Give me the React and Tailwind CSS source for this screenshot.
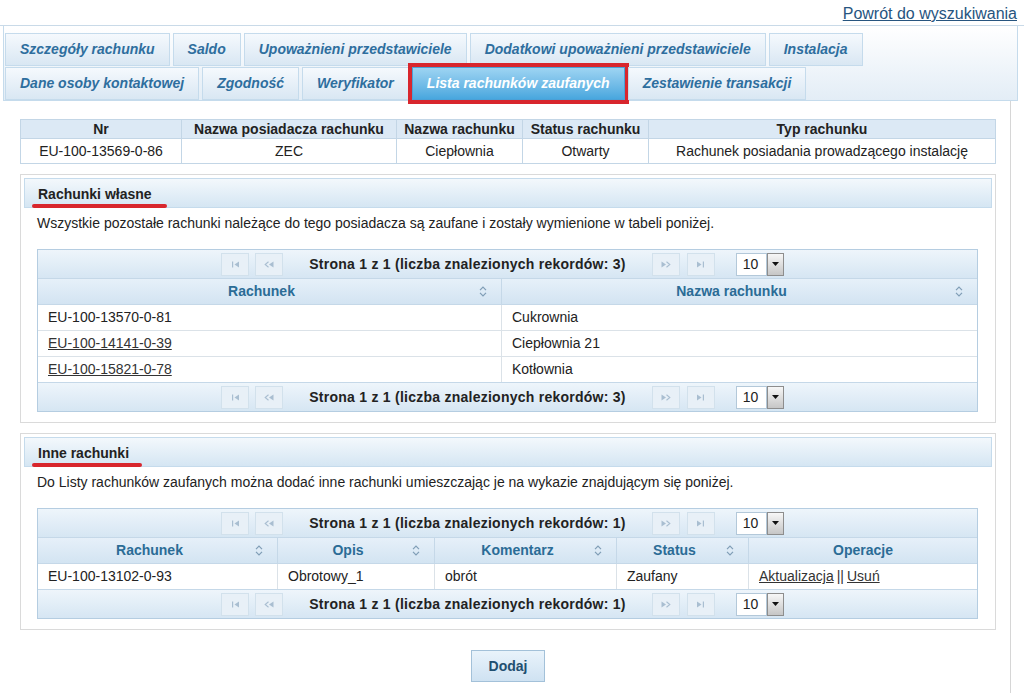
import React from "react";

const row1 = [
  "Szczegóły rachunku",
  "Saldo",
  "Upoważnieni przedstawiciele",
  "Dodatkowi upoważnieni przedstawiciele",
  "Instalacja",
];
const row2 = [
  "Dane osoby kontaktowej",
  "Zgodność",
  "Weryfikator",
  "Lista rachunków zaufanych",
  "Zestawienie transakcji",
];

function Tab({ label, active }) {
  if (active) {
    return (
      <div className="flex items-center px-[14px] border border-[#4ba0d6] bg-linear-to-b from-[#9dd4f2] to-[#48a7de] text-white font-bold italic outline-4 outline-[#d8262d]">
        {label}
      </div>
    );
  }
  return (
    <div className="flex items-center px-[14px] border border-[#c5dbec] bg-linear-to-b from-[#f5f9fd] to-[#d9e7f3] text-[#2e6e9e] font-bold italic">
      {label}
    </div>
  );
}

function SortIcon() {
  return (
    <svg
      width="8"
      height="11"
      viewBox="0 0 8 11"
      className="absolute right-[14px] top-[7px]"
    >
      <path d="M1 4.2 L4 1.2 L7 4.2" fill="none" stroke="#7f9db6" strokeWidth="1.2" />
      <path d="M1 6.8 L4 9.8 L7 6.8" fill="none" stroke="#7f9db6" strokeWidth="1.2" />
    </svg>
  );
}

function PagerIcon({ kind }) {
  const c = "#a9bed1";
  if (kind === "first")
    return (
      <svg width="9" height="7" viewBox="0 0 9 7">
        <rect x="1" y="0.5" width="1.2" height="6" fill={c} />
        <path d="M8 0.5 L3.5 3.5 L8 6.5Z" fill={c} />
      </svg>
    );
  if (kind === "prev")
    return (
      <svg width="10" height="7" viewBox="0 0 10 7">
        <path d="M4.5 0.8 L1.2 3.5 L4.5 6.2" fill="none" stroke={c} strokeWidth="1.1" />
        <path d="M9.5 0.5 L5 3.5 L9.5 6.5Z" fill={c} />
      </svg>
    );
  if (kind === "next")
    return (
      <svg width="10" height="7" viewBox="0 0 10 7">
        <path d="M0.5 0.5 L5 3.5 L0.5 6.5Z" fill={c} />
        <path d="M5.5 0.8 L8.8 3.5 L5.5 6.2" fill="none" stroke={c} strokeWidth="1.1" />
      </svg>
    );
  return (
    <svg width="9" height="7" viewBox="0 0 9 7">
      <path d="M1 0.5 L5.5 3.5 L1 6.5Z" fill={c} />
      <rect x="6.8" y="0.5" width="1.2" height="6" fill={c} />
    </svg>
  );
}

function PagerButton({ kind }) {
  return (
    <div className="w-[28px] h-[23px] flex items-center justify-center border border-[#d2e1ec] bg-[#e8f0f7]">
      <PagerIcon kind={kind} />
    </div>
  );
}

function Pager({ count, bottom }) {
  return (
    <div
      className={
        bottom
          ? "h-[29px] flex items-center justify-center pr-[10px] bg-linear-to-b from-[#eef5fb] to-[#d6e6f3] border-t border-[#c5d8e8]"
          : "h-[29px] flex items-center justify-center pr-[10px] bg-linear-to-b from-[#eef5fb] to-[#d6e6f3] border-b border-[#c5d8e8]"
      }
    >
      <PagerButton kind="first" />
      <div className="ml-[6px]">
        <PagerButton kind="prev" />
      </div>
      <div className="ml-[26px] mr-[26px] font-bold text-[#222] tracking-[0.25px] whitespace-nowrap">
        Strona 1 z 1 (liczba znalezionych rekordów: {count})
      </div>
      <PagerButton kind="next" />
      <div className="ml-[7px]">
        <PagerButton kind="last" />
      </div>
      <div className="ml-[21px] flex h-[23px]">
        <div className="w-[31px] border border-[#b3c8d9] bg-white pl-[6px] leading-[21px] text-[#222]">
          10
        </div>
        <div className="w-[17px] flex items-center justify-center border border-[#8d8d8d] bg-linear-to-b from-[#f7f7f7] to-[#c6c6c6]">
          <svg width="7" height="4" viewBox="0 0 7 4">
            <path d="M0 0 L7 0 L3.5 4Z" fill="#111" />
          </svg>
        </div>
      </div>
    </div>
  );
}

function HeadCell({ label, sort, first }) {
  return (
    <div
      className={
        first
          ? "relative h-[25px] flex items-center justify-center font-bold text-[#2b6c96] " +
            (sort ? "pr-[16px]" : "")
          : "relative h-[25px] flex items-center justify-center font-bold text-[#2b6c96] border-l border-[#c5d8e8] " +
            (sort ? "pr-[16px]" : "")
      }
    >
      {label}
      {sort && <SortIcon />}
    </div>
  );
}

function Cell({ children, first, link }) {
  return (
    <div
      className={
        first
          ? "h-[25px] flex items-center pl-[10px]"
          : "h-[25px] flex items-center pl-[10px] border-l border-[#dbe2e8]"
      }
    >
      {link ? (
        <a href="#" className="underline text-[#333]">
          {children}
        </a>
      ) : (
        children
      )}
    </div>
  );
}

function Panel({ title, line, text, children }) {
  return (
    <div className="mt-[10px] border border-[#dadada] p-[3px]">
      <div className="relative h-[30px] border border-[#c5dbec] bg-linear-to-b from-[#f3f8fc] to-[#d5e6f3] flex items-center pl-[13px] pt-[3px] font-bold text-[#222]">
        {title}
        <div className={line} />
      </div>
      <div className="pl-[13px] pr-[14px] pt-[7px] pb-[7px]">
        <div className="leading-[16px] text-[#222]">{text}</div>
        <div className="mt-[18px] border border-[#b5cde1]">{children}</div>
      </div>
    </div>
  );
}

export default function App() {
  return (
    <div className="w-[1024px] h-[693px] overflow-hidden bg-white font-['Liberation_Sans',Arial,sans-serif] text-[14px] text-[#222]">
      <div className="h-[26px] border-b border-[#c9dae8] flex justify-end pr-[7px] pt-[5px]">
        <a href="#" className="text-[16px] leading-[18px] text-[#27557f] underline">
          Powrót do wyszukiwania
        </a>
      </div>

      <div className="ml-[3px] w-[1015px] border-x border-b border-[#c5dbec] bg-linear-to-b from-white to-[#e3edf6] pt-[7px] pl-[1px] flex flex-col gap-[1px]">
        <div className="flex gap-[3px] h-[33px]">
          {row1.map((t) => (
            <Tab key={t} label={t} />
          ))}
        </div>
        <div className="flex gap-[3px] h-[33px]">
          {row2.map((t) => (
            <Tab key={t} label={t} active={t === "Lista rachunków zaufanych"} />
          ))}
        </div>
      </div>

      <div className="ml-[3px] w-[1008px] h-[592px] border-r border-[#d6d6d6] pl-[17px] pr-[14px] pt-[18px]">
        <div className="border border-[#c3d6e6]">
          <div className="grid grid-cols-[160px_215px_126px_126px_1fr] bg-[#dce9f5] border-b border-[#c3d6e6] font-bold text-[#222] leading-[18px] text-center">
            <div className="h-[18px]">Nr</div>
            <div className="h-[18px] border-l border-[#c3d6e6]">Nazwa posiadacza rachunku</div>
            <div className="h-[18px] border-l border-[#c3d6e6]">Nazwa rachunku</div>
            <div className="h-[18px] border-l border-[#c3d6e6]">Status rachunku</div>
            <div className="h-[18px] border-l border-[#c3d6e6]">Typ rachunku</div>
          </div>
          <div className="grid grid-cols-[160px_215px_126px_126px_1fr] text-center leading-[24px]">
            <div className="h-[24px]">EU-100-13569-0-86</div>
            <div className="h-[24px] border-l border-[#c3d6e6]">ZEC</div>
            <div className="h-[24px] border-l border-[#c3d6e6]">Ciepłownia</div>
            <div className="h-[24px] border-l border-[#c3d6e6]">Otwarty</div>
            <div className="h-[24px] border-l border-[#c3d6e6]">
              Rachunek posiadania prowadzącego instalację
            </div>
          </div>
        </div>

        <Panel
          title="Rachunki własne"
          line="absolute left-[7px] top-[25px] w-[135px] h-[4px] rounded-full bg-[#d8262d]"
          text="Wszystkie pozostałe rachunki należące do tego posiadacza są zaufane i zostały wymienione w tabeli poniżej."
        >
          <Pager count={3} />
          <div className="grid grid-cols-[463px_1fr] bg-linear-to-b from-[#e6f0f9] to-[#d3e4f2] border-b border-[#c5d8e8]">
            <HeadCell label="Rachunek" sort first />
            <HeadCell label="Nazwa rachunku" sort />
          </div>
          <div className="grid grid-cols-[463px_1fr] border-b border-[#dbe2e8]">
            <Cell first>EU-100-13570-0-81</Cell>
            <Cell>Cukrownia</Cell>
          </div>
          <div className="grid grid-cols-[463px_1fr] border-b border-[#dbe2e8]">
            <Cell first link>
              EU-100-14141-0-39
            </Cell>
            <Cell>Ciepłownia 21</Cell>
          </div>
          <div className="grid grid-cols-[463px_1fr]">
            <Cell first link>
              EU-100-15821-0-78
            </Cell>
            <Cell>Kotłownia</Cell>
          </div>
          <Pager count={3} bottom />
        </Panel>

        <Panel
          title="Inne rachunki"
          line="absolute left-[7px] top-[25px] w-[110px] h-[4px] rounded-full bg-[#d8262d]"
          text="Do Listy rachunków zaufanych można dodać inne rachunki umieszczając je na wykazie znajdującym się poniżej."
        >
          <Pager count={1} />
          <div className="grid grid-cols-[239px_157px_182px_132px_1fr] bg-linear-to-b from-[#e6f0f9] to-[#d3e4f2] border-b border-[#c5d8e8]">
            <HeadCell label="Rachunek" sort first />
            <HeadCell label="Opis" sort />
            <HeadCell label="Komentarz" sort />
            <HeadCell label="Status" sort />
            <HeadCell label="Operacje" />
          </div>
          <div className="grid grid-cols-[239px_157px_182px_132px_1fr]">
            <Cell first>EU-100-13102-0-93</Cell>
            <Cell>Obrotowy_1</Cell>
            <Cell>obrót</Cell>
            <Cell>Zaufany</Cell>
            <div className="h-[25px] flex items-center pl-[10px] border-l border-[#dbe2e8] text-[#333]">
              <a href="#" className="underline">
                Aktualizacja
              </a>
              <span className="mx-[3px]">||</span>
              <a href="#" className="underline">
                Usuń
              </a>
            </div>
          </div>
          <Pager count={1} bottom />
        </Panel>

        <div className="flex justify-center mt-[20px]">
          <button className="w-[74px] h-[32px] border border-[#a3c1d9] bg-linear-to-b from-[#e9f3fb] to-[#cfe2f2] font-bold text-[#1f4f70]">
            Dodaj
          </button>
        </div>
      </div>
    </div>
  );
}
